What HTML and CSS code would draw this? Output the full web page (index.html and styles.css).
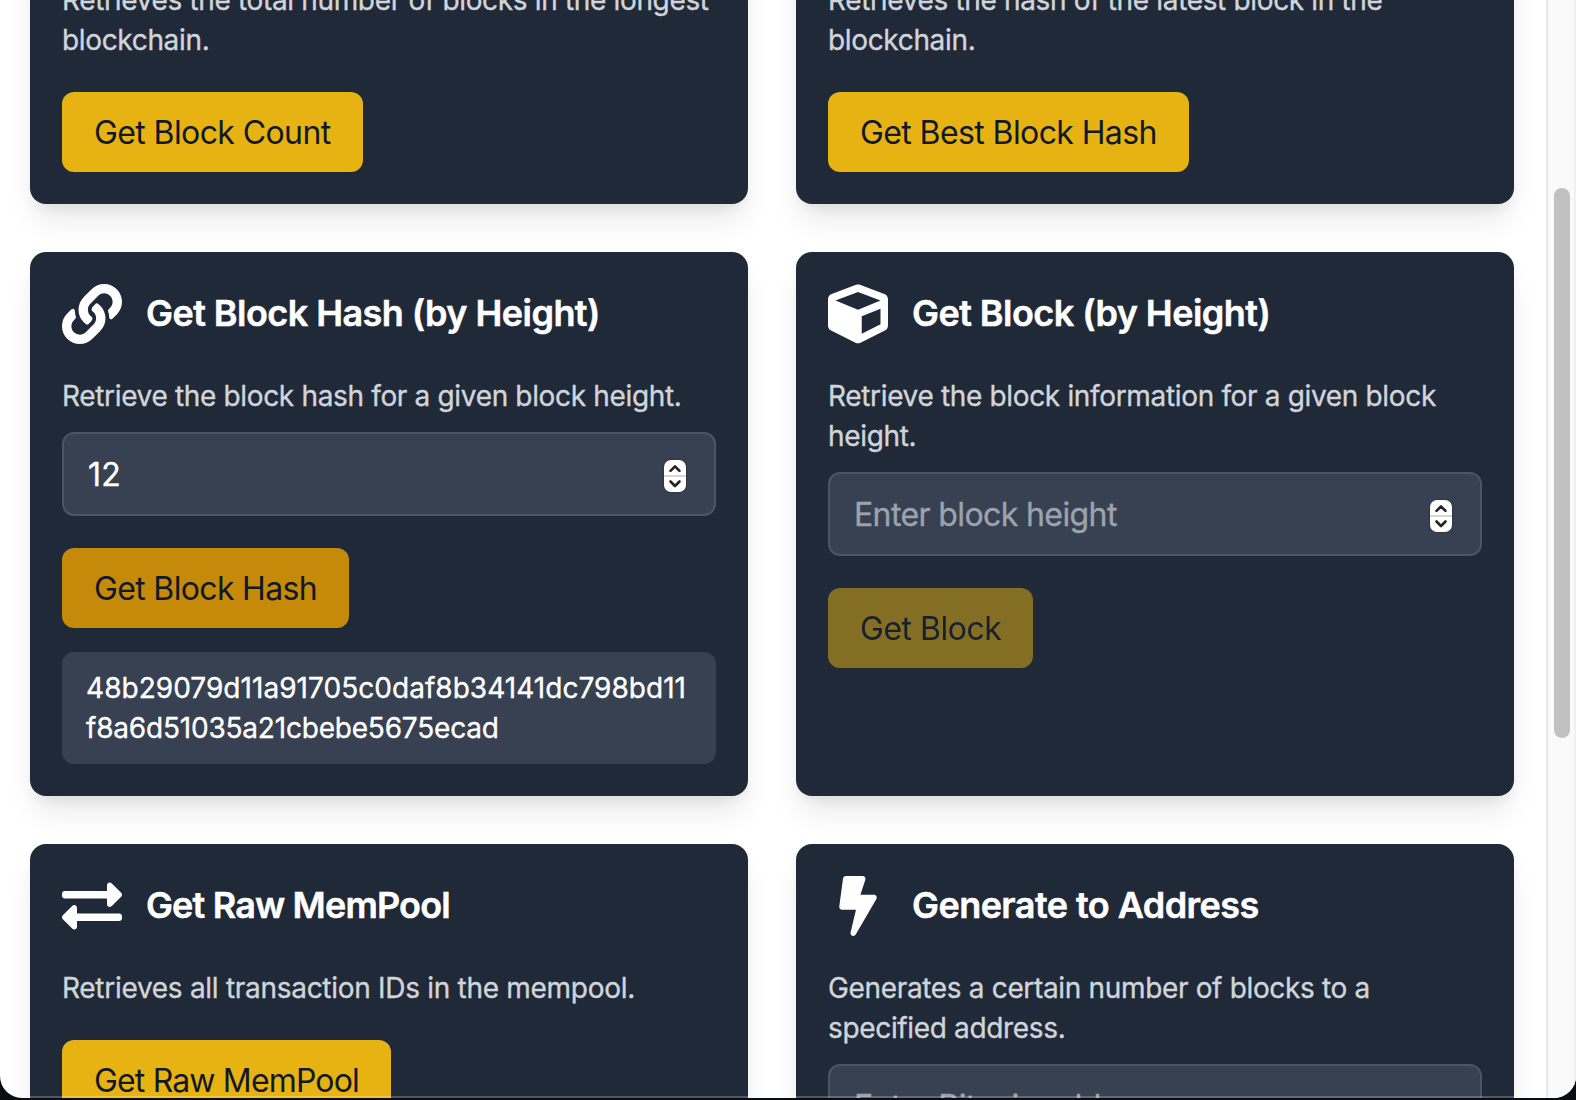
FILE: index.html
```html
<!DOCTYPE html>
<html lang="en">
<head>
<meta charset="utf-8">
<title>Block explorer</title>
<link rel="stylesheet" href="styles.css">
</head>
<body>
<div class="window">
  <main class="cards">
    <section class="card">
      <p class="desc">Retrieves the total number of blocks in the longest blockchain.</p>
      <button class="btn">Get Block Count</button>
    </section>
    <section class="card">
      <p class="desc">Retrieves the hash of the latest block in the blockchain.</p>
      <button class="btn">Get Best Block Hash</button>
    </section>

    <section class="card">
      <header class="head">
        <svg class="icon" viewBox="0 0 512 512"><path d="M326.612 185.391c59.747 59.809 58.927 155.698.36 214.59-.11.12-.24.25-.36.37l-67.2 67.2c-59.27 59.27-155.699 59.262-214.96 0-59.27-59.26-59.27-155.7 0-214.96l37.106-37.106c9.84-9.84 26.786-3.3 27.294 10.606.648 17.722 3.826 35.527 9.69 52.721 1.986 5.822.567 12.262-3.783 16.612l-13.087 13.087c-28.026 28.026-28.905 73.66-1.155 101.96 28.024 28.579 74.086 28.749 102.325.51l67.2-67.19c28.191-28.191 28.073-73.757 0-101.83-3.701-3.694-7.429-6.564-10.341-8.569a16.037 16.037 0 0 1-6.947-12.606c-.396-10.567 3.348-21.456 11.698-29.806l21.054-21.055c5.521-5.521 14.182-6.199 20.584-1.731a152.482 152.482 0 0 1 20.522 17.197zM467.547 44.449c-59.261-59.262-155.69-59.27-214.96 0l-67.2 67.2c-.12.12-.25.25-.36.37-58.566 58.892-59.387 154.781.36 214.59a152.454 152.454 0 0 0 20.521 17.196c6.402 4.468 15.064 3.789 20.584-1.731l21.054-21.055c8.35-8.35 12.094-19.239 11.698-29.806a16.037 16.037 0 0 0-6.947-12.606c-2.912-2.005-6.64-4.875-10.341-8.569-28.073-28.073-28.191-73.639 0-101.83l67.2-67.19c28.239-28.239 74.3-28.069 102.325.51 27.75 28.3 26.872 73.934-1.155 101.96l-13.087 13.087c-4.35 4.35-5.769 10.79-3.783 16.612 5.864 17.194 9.042 34.999 9.69 52.721.509 13.906 17.454 20.446 27.294 10.606l37.106-37.106c59.271-59.259 59.271-155.699.001-214.959z"/></svg>
        <h2 class="title">Get Block Hash (by Height)</h2>
      </header>
      <p class="desc">Retrieve the block hash for a given block height.</p>
      <div class="field">
        <input class="input input-filled" type="text" value="12">
        <svg class="spin" viewBox="0 0 22 32"><rect width="22" height="32" rx="7" fill="#fff"/><path class="spin-line" d="M0 16h22"/><path class="spin-arrow" d="M6.500 10.800 11 6.300l4.500 4.500M6.500 21.500l4.500 4.500 4.500-4.500"/></svg>
      </div>
      <button class="btn btn-hover">Get Block Hash</button>
      <div class="result"><span class="hash-head">48b29079d11a91705c0daf8b34141dc798bd11</span><span class="hash-tail">f8a6d51035a21cbebe5675ecad</span></div>
    </section>
    <section class="card">
      <header class="head">
        <svg class="icon" viewBox="0 0 512 512"><path d="M239.1 6.3l-208 78c-18.7 7-31.1 25-31.1 45v225.1c0 18.2 10.3 34.800 26.500 42.900l208 104c13.500 6.800 29.400 6.800 42.900 0l208-104c16.300-8.100 26.500-24.800 26.500-42.900V129.300c0-20-12.400-37.900-31.100-44.900l-208-78C262 2.200 250 2.200 239.100 6.300zM256 68.400l192 72v1.100l-192 78-192-78v-1.100l192-72zm32 356V275.500l160-65v133.900l-160 80z"/></svg>
        <h2 class="title">Get Block (by Height)</h2>
      </header>
      <p class="desc">Retrieve the block information for a given block height.</p>
      <div class="field">
        <input class="input" type="text" placeholder="Enter block height">
        <svg class="spin" viewBox="0 0 22 32"><rect width="22" height="32" rx="7" fill="#fff"/><path class="spin-line" d="M0 16h22"/><path class="spin-arrow" d="M6.500 10.800 11 6.300l4.500 4.500M6.500 21.500l4.500 4.500 4.500-4.500"/></svg>
      </div>
      <button class="btn btn-disabled">Get Block</button>
    </section>

    <section class="card">
      <header class="head">
        <svg class="icon" viewBox="0 0 512 512"><path d="M0 168v-16c0-13.255 10.745-24 24-24h360V80c0-21.367 25.899-32.042 40.971-16.971l80 80c9.372 9.373 9.372 24.569 0 33.941l-80 80C409.956 271.982 384 261.456 384 240v-48H24c-13.255 0-24-10.745-24-24zm488 152H128v-48c0-21.314-25.862-32.080-40.971-16.971l-80 80c-9.372 9.373-9.372 24.569 0 33.941l80 80C102.057 463.997 128 453.437 128 432v-48h360c13.255 0 24-10.745 24-24v-16c0-13.255-10.745-24-24-24z"/></svg>
        <h2 class="title tight">Get Raw MemPool</h2>
      </header>
      <p class="desc loose">Retrieves all transaction IDs in the mempool.</p>
      <button class="btn tight">Get Raw MemPool</button>
    </section>
    <section class="card">
      <header class="head">
        <svg class="icon" viewBox="-96 0 512 512"><path d="M296 160H180.600l42.600-129.800C227.200 15 215.700 0 200 0H56C44 0 33.800 8.900 32.200 20.800l-32 240C-1.700 275.200 9.500 288 24 288h118.700L96.600 482.500c-3.600 15.200 8 29.500 23.300 29.500 8.400 0 16.400-4.400 20.800-12l176-304c9.300-15.900-2.200-36-20.700-36z"/></svg>
        <h2 class="title">Generate to Address</h2>
      </header>
      <p class="desc">Generates a certain number of blocks to a specified address.</p>
      <div class="field">
        <input class="input" type="text" placeholder="Enter Bitcoin address">
      </div>
    </section>
  </main>
  <div class="scrollbar"><div class="thumb"></div></div>
</div>
</body>
</html>
```
FILE: styles.css
```css
* { box-sizing: border-box; }

body {
  margin: 0;
  height: 1100px;
  overflow: hidden;
  background: #0b0c12;
  font-family: Inter, "Liberation Sans", sans-serif;
}

.window {
  position: relative;
  display: flex;
  height: 1098px;
  overflow: hidden;
  background: #fff;
  border-radius: 0 0 22px 22px;
}

.window::after {
  content: "";
  position: absolute;
  inset: auto 0 0;
  height: 2px;
  background: rgba(255, 255, 255, 0.22);
}

.cards {
  flex: 1;
  display: grid;
  grid-template-columns: 718px 718px;
  grid-template-rows: 256px 544px 544px;
  gap: 48px;
  margin-top: -52px;
  padding-left: 30px;
}

.card {
  padding: 32px;
  background: #1f2937;
  border-radius: 16px;
  box-shadow: 0 20px 30px -6px rgba(0, 0, 0, 0.1), 0 8px 12px -4px rgba(0, 0, 0, 0.06);
}

.head {
  display: flex;
  align-items: center;
  gap: 24px;
  margin-bottom: 32px;
}

.icon {
  width: 60px;
  height: 60px;
  fill: #fff;
}

.title {
  margin: 0;
  padding-bottom: 2px;
  color: #fff;
  font-size: 36px;
  line-height: 56px;
  font-weight: 600;
  letter-spacing: -0.55px;
  -webkit-text-stroke: 0.5px;
}

.desc {
  margin: 0;
  color: #d1d5db;
  font-size: 28px;
  line-height: 40px;
  letter-spacing: -0.34px;
  -webkit-text-stroke: 0.35px;
}

.loose { letter-spacing: -0.29px; }

.field {
  position: relative;
  margin-top: 16px;
}

.input {
  display: block;
  width: 100%;
  height: 84px;
  padding: 0 24px;
  border: 2px solid #4b5563;
  border-radius: 12px;
  outline: 0;
  background: #374151;
  color: #fff;
  font: 32px Inter, "Liberation Sans", sans-serif;
  letter-spacing: -0.61px;
  -webkit-text-stroke: 0.35px;
}

.input-filled {
  padding-left: 24px;
  letter-spacing: 0.2px;
}

.input::placeholder { color: #9ca3af; opacity: 1; }

.spin {
  position: absolute;
  top: 28px;
  right: 30px;
  width: 22px;
  height: 32px;
  filter: drop-shadow(0 0 1px rgba(0, 0, 0, 0.4));
}

.spin-line { stroke: #d6d6d6; stroke-width: 2; }

.spin-arrow {
  fill: none;
  stroke: #222;
  stroke-width: 2.6;
  stroke-linecap: round;
  stroke-linejoin: round;
}

.btn {
  display: block;
  height: 80px;
  margin: 32px 0 0;
  padding: 0 32px;
  border: 0;
  border-radius: 12px;
  background: #e7b312;
  color: #111827;
  font: 32px Inter, "Liberation Sans", sans-serif;
  letter-spacing: -0.6px;
  white-space: nowrap;
}

.tight { letter-spacing: -0.84px; }

.btn-hover { background: #c58a0a; letter-spacing: -0.66px; }
.btn-disabled { opacity: 0.5; letter-spacing: -0.5px; }

.result {
  margin-top: 24px;
  padding: 16px 24px;
  border-radius: 12px;
  background: #374151;
  color: #fff;
  font-size: 28px;
  line-height: 40px;
  word-break: break-all;
  -webkit-text-stroke: 0.35px;
}

.hash-head { letter-spacing: 0.04px; }
.hash-tail { letter-spacing: -0.2px; }

.scrollbar {
  width: 30px;
  padding: 188px 4px 0 6px;
  border: solid #e8e8e8;
  border-width: 0 2px;
  border-right-color: #f0f0f0;
  background: #fafafa;
}

.thumb {
  width: 16px;
  height: 550px;
  border-radius: 8px;
  background: #c1c1c1;
}
```
